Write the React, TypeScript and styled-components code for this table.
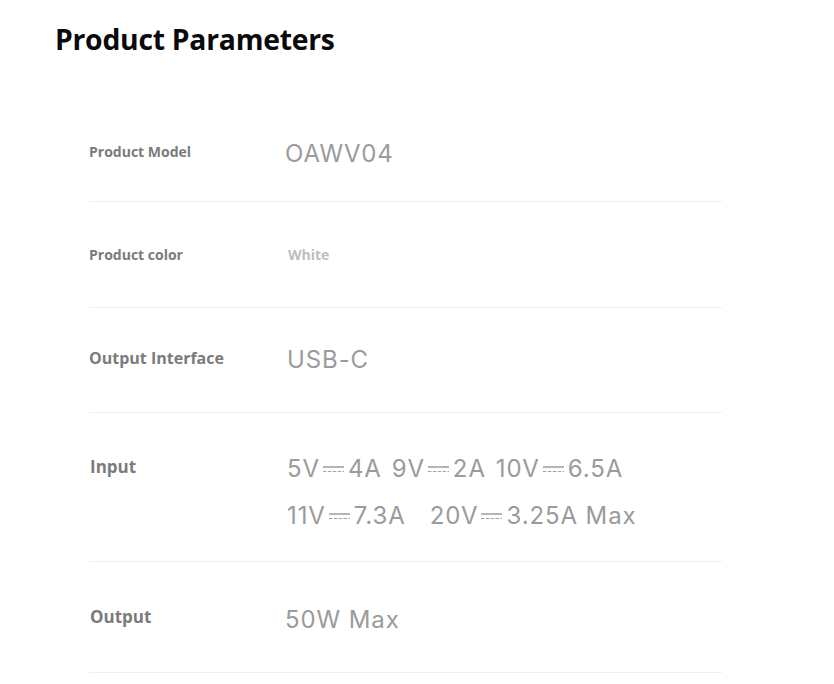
import React from "react";
import styled, { createGlobalStyle } from "styled-components";

const Global = createGlobalStyle`
  html, body { margin: 0; padding: 0; background: #ffffff; }
  body { font-family: "Open Sans", "Noto Sans", sans-serif; }
`;

const Page = styled.div`
  width: 834px;
  height: 684px;
  overflow: hidden;
  box-sizing: border-box;
  padding: 20px 0 0 0;
`;

const Title = styled.h1`
  margin: 0 0 0 55px;
  font-family: "Open Sans", sans-serif;
  font-weight: 700;
  font-size: 28.3px;
  line-height: 38px;
  letter-spacing: -0.25px;
  color: #0a0a0a;
`;

const Table = styled.div`
  margin: 41px 0 0 89px;
  width: 633px;
  display: flex;
  flex-direction: column;
`;

const Row = styled.div<{ $pt: number; $pb: number }>`
  display: grid;
  grid-template-columns: 196px 1fr;
  align-items: start;
  padding: ${(p) => p.$pt}px 0 ${(p) => p.$pb}px 0;
  border-bottom: 1.5px solid #efefef;
`;

const Label = styled.div<{ $size: number; $dx?: number; $dy?: number }>`
  font-family: "Open Sans", sans-serif;
  font-weight: 700;
  font-size: ${(p) => p.$size}px;
  line-height: 26px;
  color: #7b7b7b;
  padding-left: ${(p) => p.$dx ?? 0}px;
  margin-top: ${(p) => p.$dy ?? 0}px;
  margin-bottom: ${(p) => -(p.$dy ?? 0)}px;
`;

const Value = styled.div<{ $dx?: number; $dy?: number }>`
  font-family: "Inter", "Roboto", sans-serif;
  font-weight: 400;
  font-size: 24px;
  line-height: 26px;
  letter-spacing: 0.9px;
  color: #9b9b9b;
  padding-left: ${(p) => p.$dx ?? 0}px;
  margin-top: ${(p) => p.$dy ?? 0}px;
  margin-bottom: ${(p) => -(p.$dy ?? 0)}px;
  display: flex;
  flex-direction: column;
  gap: 21px;
`;

const SmallValue = styled.div<{ $dx?: number }>`
  font-family: "Open Sans", sans-serif;
  font-weight: 700;
  font-size: 14px;
  line-height: 26px;
  color: #bdbdbd;
  padding-left: ${(p) => p.$dx ?? 0}px;
`;

const Line = styled.span`
  display: flex;
  align-items: center;
  white-space: nowrap;
`;

const Gap = styled.span<{ $w: number }>`
  display: inline-block;
  width: ${(p) => p.$w}px;
`;

const DcIcon = styled.svg`
  width: 21px;
  height: 10px;
  margin: 0 4px 0 3px;
  flex: none;
`;

const Dc = () => (
  <DcIcon viewBox="0 0 21 10">
    <line x1="0" y1="3" x2="21" y2="3" stroke="#a3a3a3" strokeWidth="1.6" />
    <line x1="0" y1="7.5" x2="21" y2="7.5" stroke="#a3a3a3" strokeWidth="1.2" strokeDasharray="3.4 1.5" />
  </DcIcon>
);

const Spec = ({ v, a }: { v: string; a: string }) => (
  <>
    {v}
    <Dc />
    {a}
  </>
);

export default function App() {
  return (
    <Page>
      <Global />
      <Title>Product Parameters</Title>
      <Table>
        <Row $pt={40} $pb={36}>
          <Label $size={14}>Product Model</Label>
          <Value $dx={-1} $dy={2}>OAWV04</Value>
        </Row>
        <Row $pt={40} $pb={39}>
          <Label $size={14}>Product color</Label>
          <SmallValue $dx={3}>White</SmallValue>
        </Row>
        <Row $pt={37} $pb={41}>
          <Label $size={16}>Output Interface</Label>
          <Value $dx={2} $dy={2}>USB-C</Value>
        </Row>
        <Row $pt={40} $pb={35}>
          <Label $size={17} $dx={1} $dy={1}>Input</Label>
          <Value $dx={2} $dy={3}>
            <Line>
              <Spec v="5V" a="4A" />
              <Gap $w={10} />
              <Spec v="9V" a="2A" />
              <Gap $w={10} />
              <Spec v="10V" a="6.5A" />
            </Line>
            <Line>
              <Spec v="11V" a="7.3A" />
              <Gap $w={24} />
              <Spec v="20V" a="3.25A Max" />
            </Line>
          </Value>
        </Row>
        <Row $pt={42} $pb={42}>
          <Label $size={17} $dx={1}>Output</Label>
          <Value $dx={-1} $dy={3}>50W Max</Value>
        </Row>
      </Table>
    </Page>
  );
}
